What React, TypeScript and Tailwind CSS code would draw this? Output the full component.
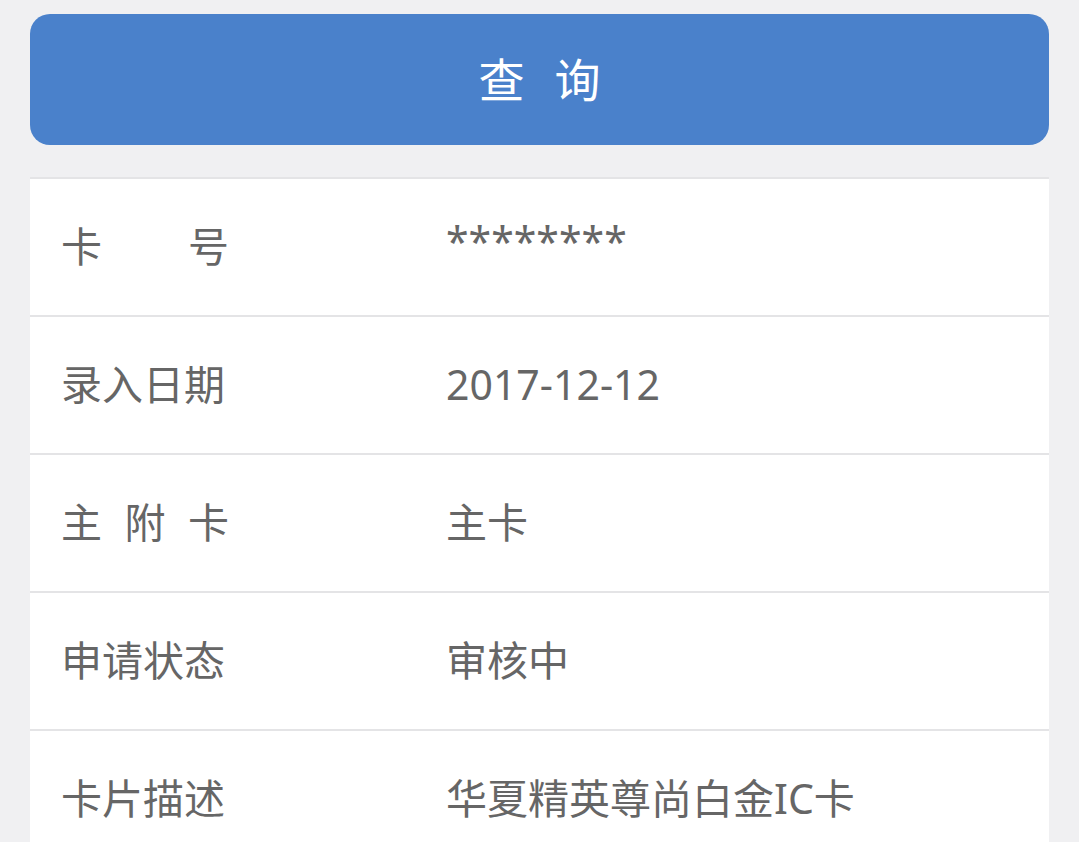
import React from "react";

const font = { fontFamily: '"Noto Sans", "Noto Sans CJK SC", sans-serif' };

function Label({ chars }: { chars: string[] }) {
  return (
    <div className="flex w-[168px] justify-between">
      {chars.map((c, i) => (
        <span key={i}>{c}</span>
      ))}
    </div>
  );
}

const rows: { label: string[]; value: string }[] = [
  { label: ["卡", "号"], value: "********" },
  { label: ["录入日期"], value: "2017-12-12" },
  { label: ["主", "附", "卡"], value: "主卡" },
  { label: ["申请状态"], value: "审核中" },
  { label: ["卡片描述"], value: "华夏精英尊尚白金IC卡" },
];

export default function App() {
  return (
    <div
      className="min-h-[842px] bg-[#f0f0f2] px-[30px] pt-[14px] font-['Noto_Sans','Noto_Sans_CJK_SC',sans-serif]"
      style={font}
    >
      <button className="flex h-[131px] w-full items-center justify-center gap-[30px] rounded-[20px] bg-[#4a81cb] text-[46px] text-white">
        <span>查</span>
        <span>询</span>
      </button>
      <div className="mt-[32px] border-t-2 border-[#e4e4e6] bg-white">
        {rows.map((r, i) => (
          <div
            key={i}
            className="flex h-[138px] items-center border-b-2 border-[#e4e4e6] pl-[31px] text-[41px] text-[#666666]"
          >
            <div className="w-[385px]">
              {r.label.length === 1 ? <span>{r.label[0]}</span> : <Label chars={r.label} />}
            </div>
            <div className={i === 0 ? "-mt-[10px]" : ""}>{r.value}</div>
          </div>
        ))}
      </div>
    </div>
  );
}
